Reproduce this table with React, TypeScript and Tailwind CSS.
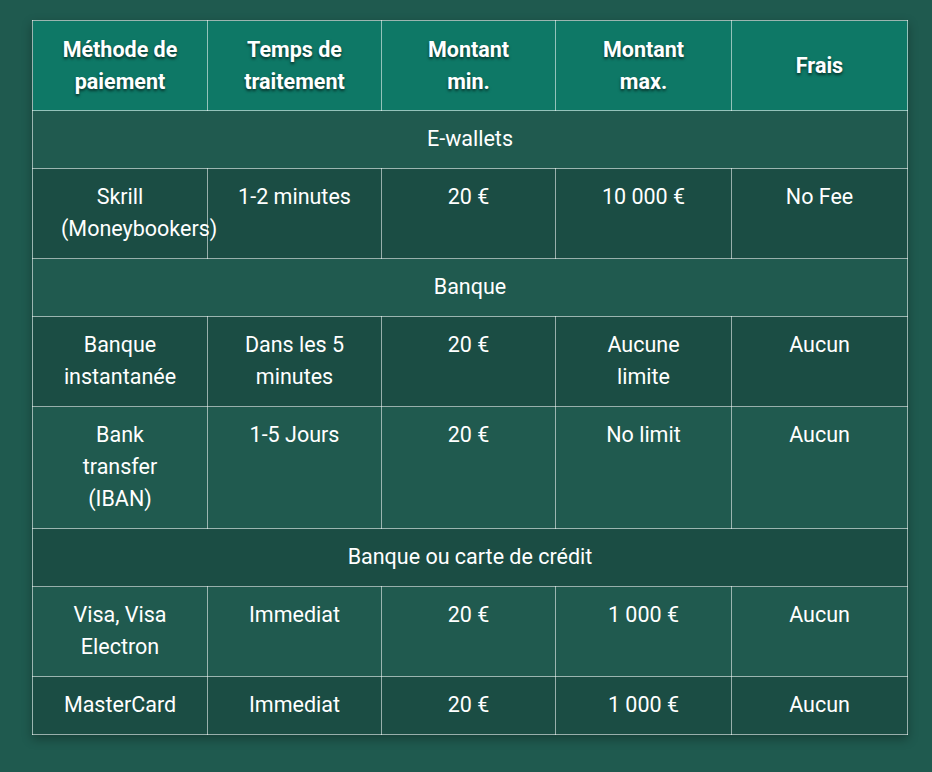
import React from "react";

type Row = { kind: "section"; label: string } | { kind: "data"; cells: string[] };

const rows: Row[] = [
  { kind: "section", label: "E-wallets" },
  { kind: "data", cells: ["Skrill (Moneybookers)", "1-2 minutes", "20 €", "10 000 €", "No Fee"] },
  { kind: "section", label: "Banque" },
  { kind: "data", cells: ["Banque instantanée", "Dans les 5 minutes", "20 €", "Aucune limite", "Aucun"] },
  { kind: "data", cells: ["Bank transfer (IBAN)", "1-5 Jours", "20 €", "No limit", "Aucun"] },
  { kind: "section", label: "Banque ou carte de crédit" },
  { kind: "data", cells: ["Visa, Visa Electron", "Immediat", "20 €", "1 000 €", "Aucun"] },
  { kind: "data", cells: ["MasterCard", "Immediat", "20 €", "1 000 €", "Aucun"] },
];

const headers = ["Méthode de paiement", "Temps de traitement", "Montant min.", "Montant max.", "Frais"];

export default function App() {
  return (
    <div
      className="min-h-[772px] w-full bg-[#1f5a4f] pt-[20px] pl-[32px] text-white"
      style={{ fontFamily: "Roboto, 'Noto Sans', sans-serif" }}
    >
      <table className="w-[875px] table-fixed border-collapse text-[21.5px] leading-[32px] shadow-[0_4px_10px_rgba(0,0,0,0.3)]">
        <colgroup>
          <col className="w-[175px]" />
          <col className="w-[174px]" />
          <col className="w-[174px]" />
          <col className="w-[176px]" />
          <col className="w-[176px]" />
        </colgroup>
        <thead>
          <tr className="bg-[#0e7866]">
            {headers.map((h) => (
              <th
                key={h}
                className="h-[90px] border border-white/55 px-[28px] py-[12px] text-center align-middle font-bold [text-shadow:0_2px_3px_rgba(0,0,0,0.6)]"
              >
                {h}
              </th>
            ))}
          </tr>
        </thead>
        <tbody>
          {rows.map((r, i) =>
            r.kind === "section" ? (
              <tr key={i} className={i % 2 === 0 ? "bg-[#205a4f]" : "bg-[#1b4d44]"}>
                <td colSpan={5} className="border border-white/55 px-[28px] pt-[12px] pb-[13px] text-center align-top">
                  {r.label}
                </td>
              </tr>
            ) : (
              <tr key={i} className={i % 2 === 0 ? "bg-[#205a4f]" : "bg-[#1b4d44]"}>
                {r.cells.map((c, j) => (
                  <td key={j} className="border border-white/55 px-[28px] pt-[12px] pb-[13px] text-center align-top">
                    {c}
                  </td>
                ))}
              </tr>
            )
          )}
        </tbody>
      </table>
    </div>
  );
}
